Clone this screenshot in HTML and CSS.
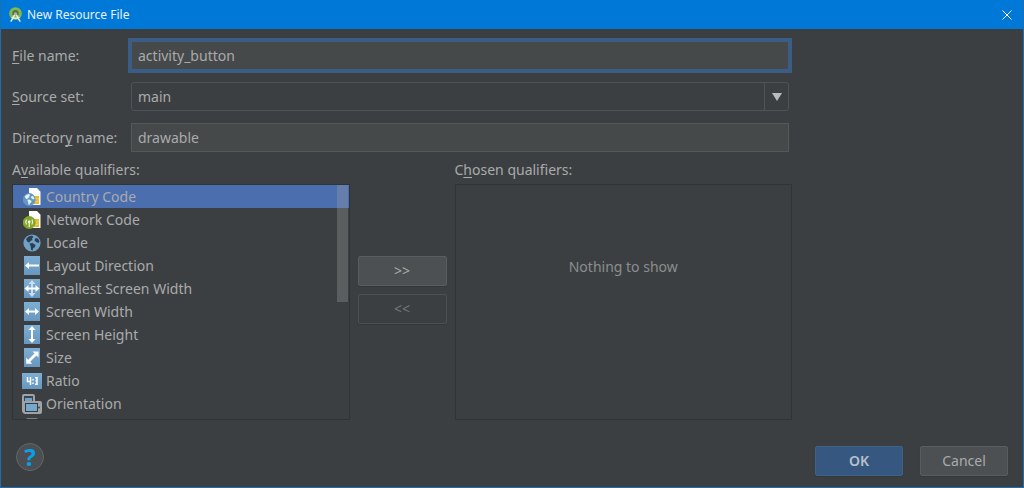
FILE: index.html
```html
<!DOCTYPE html>
<html lang="en">
<head>
<meta charset="utf-8">
<meta name="viewport" content="width=device-width, initial-scale=1">
<title>New Resource File</title>
<link rel="stylesheet" href="styles.css">
</head>
<body>
<svg class="defs" aria-hidden="true">
  <defs>
    <linearGradient id="tile" x1="0" y1="0" x2="0" y2="1"><stop offset="0" stop-color="#7eaed2"/><stop offset="1" stop-color="#6797bf"/></linearGradient>
    <g id="land" fill="currentColor">
      <path d="M3 5 5.500 2.500 9 1.500l1.500 1.500L9 4.500 9.500 6 7.500 7 6.500 8.500 4.500 8z"/>
      <path d="m6.500 9.500 3-.5 3 2-.5 2-2 1.500-.5 2.300-1.500-1.300-.3-3z"/>
      <path d="m12.500 4 2.500.5 1.500 3-1 1.500-2.500-1-1.500-1.800z"/>
    </g>
    <g id="sim">
      <path d="M6 0h8l3.500 3.800V17H6z" fill="#fff"/>
      <path d="M11 8h5v8h-5z" fill="#e6bd2c"/>
      <path d="M11 10.700h5M11 13.300h5" stroke="#f6dc72" stroke-width=".6"/>
    </g>
  </defs>
</svg>
<form class="dialog">
  <header class="titlebar">
    <svg class="app-icon" viewBox="0 0 16 16" aria-hidden="true">
      <circle cx="8" cy="7" r="6.800" fill="#83b84d"/>
      <path d="M4.600 6.500a3.400 3.400 0 0 1 6.800 0v2H4.600z" fill="#56744c"/>
      <path d="M7 8.600 3.300 15M9 8.600l3.700 6.400M4.400 11.200Q8 12.800 11.600 11.200" fill="none" stroke="#e8eee8" stroke-width="1.600" stroke-linecap="round"/>
      <circle cx="8" cy="7.200" r="1.700" fill="#a9b5a2"/>
    </svg>
    <h1 class="title">New Resource File</h1>
    <button class="close" type="button" aria-label="Close">
      <svg viewBox="0 0 10 10" aria-hidden="true"><path d="m.5.5 9 9m0-9-9 9" stroke="#fff" stroke-width="1"/></svg>
    </button>
  </header>
  <main class="content">
    <div class="fields">
      <label for="file"><u>F</u>ile name:</label>
      <input class="field focused" id="file" type="text" value="activity_button">
      <label for="source"><u>S</u>ource set:</label>
      <div class="combo">
        <select class="field" id="source"><option>main</option></select>
        <span class="combo-arrow"><svg viewBox="0 0 10 8" aria-hidden="true"><path d="M0 0h10L5 8z" fill="#bbb"/></svg></span>
      </div>
      <label for="dir">Director<u>y</u> name:</label>
      <input class="field" id="dir" type="text" value="drawable">
    </div>
    <div class="qualifiers">
      <section class="column">
        <h2 class="caption" id="available">A<u>v</u>ailable qualifiers:</h2>
        <div class="panel">
          <ul class="list" role="listbox" tabindex="0" aria-labelledby="available">
            <li class="item selected" role="option" aria-selected="true"><svg viewBox="0 0 18 18"><use href="#sim"/><circle cx="6.200" cy="11.500" r="6.400" fill="#6298c2"/><g transform="translate(-.4 5) scale(.72)" color="#e6f0f7"><use href="#land"/></g></svg>Country Code</li>
            <li class="item" role="option"><svg viewBox="0 0 18 18"><use href="#sim"/><circle cx="6.200" cy="11.500" r="6.400" fill="#83a52b"/><path d="M6.200 11.500V16M3.500 8.500q-1.500 2.500 0 5M8.900 8.500q1.500 2.500 0 5" fill="none" stroke="#f2f7db" stroke-width="1.200"/><circle cx="6.200" cy="10.800" r="1.400" fill="#fff"/></svg>Network Code</li>
            <li class="item" role="option"><svg viewBox="0 0 18 18"><circle cx="9" cy="9" r="8.600" fill="#70a2c8"/><g color="#2b4152"><use href="#land"/></g></svg>Locale</li>
            <li class="item" role="option"><svg class="tall" viewBox="0 0 18 19"><path d="M1 0h16v19H1z" fill="url(#tile)"/><path d="M6 6 2 9.500 6 13v-2.500h10v-2H6z" fill="#fff"/></svg>Layout Direction</li>
            <li class="item" role="option"><svg class="tall" viewBox="0 0 18 19"><path d="M1 0h16v19H1z" fill="url(#tile)"/><path d="m9 1 3.500 4H10v9h2.500L9 18l-3.500-4H8V5H5.500z" fill="#c9ddeb"/><path d="m1.500 9.500 4-3.500v2.500h7V6l4 3.500-4 3.500v-2.500h-7V13z" fill="#fff"/></svg>Smallest Screen Width</li>
            <li class="item" role="option"><svg class="tall" viewBox="0 0 18 19"><path d="M1 0h16v19H1z" fill="url(#tile)"/><path d="m2 9.500 4-3.500v2.500h6V6l4 3.500-4 3.500v-2.500H6V13z" fill="#fff"/></svg>Screen Width</li>
            <li class="item" role="option"><svg class="tall" viewBox="0 0 18 19"><path d="M1 0h16v19H1z" fill="url(#tile)"/><path d="m9 1 3.500 4H10v9h2.500L9 18l-3.500-4H8V5H5.500z" fill="#fff"/></svg>Screen Height</li>
            <li class="item" role="option"><svg class="tall" viewBox="0 0 18 19"><path d="M1 0h16v19H1z" fill="url(#tile)"/><path d="M15.500 3.500v6l-2-2-6.300 6.300 2 2h-6v-6l2 2 6.300-6.300-2-2z" fill="#fff"/></svg>Size</li>
            <li class="item" role="option"><svg class="wide" viewBox="0 0 20 20"><path d="M0 2h20v16H0z" fill="url(#tile)"/><path d="M5.500 6v4.500H9M8.500 6v8M13 6.700h2v6.600h-2M13.500 10h1.500" fill="none" stroke="#fff" stroke-width="1.500"/><path d="M10.300 8h1.400v1.500h-1.400zM10.300 11.500h1.400V13h-1.400z" fill="#fff"/></svg>Ratio</li>
            <li class="item" role="option"><svg class="wide" viewBox="0 0 20 20"><rect x="1" y="1" width="11" height="17" rx="1" fill="#3b4750" stroke="#a0a3a5" stroke-width="2"/><path d="M3 4h7v3H3z" fill="#6fa2c8"/><rect x="2" y="8" width="17" height="11" rx="1" fill="#353b40" stroke="#a0a3a5" stroke-width="2"/><path d="M4 10h11v7H4z" fill="#75a8cd"/><path d="M16 9h2v9h-2z" fill="#a0a3a5"/><circle cx="17" cy="13.500" r="1" fill="#444"/></svg>Orientation</li>
            <li class="item" role="option" aria-label="UI mode"><svg viewBox="0 0 18 18"><rect x="4" y="1" width="10" height="16" rx="1" fill="#507b9d" stroke="#808385" stroke-width="2"/></svg></li>
          </ul>
          <span class="thumb"></span>
        </div>
      </section>
      <div class="transfer">
        <button class="btn" type="button" aria-label="Add qualifier">&gt;&gt;</button>
        <button class="btn" type="button" aria-label="Remove qualifier" disabled>&lt;&lt;</button>
      </div>
      <section class="column">
        <h2 class="caption">C<u>h</u>osen qualifiers:</h2>
        <div class="panel empty"><p>Nothing to show</p></div>
      </section>
    </div>
  </main>
  <footer class="footer">
    <button class="help" type="button" aria-label="Help">?</button>
    <div class="actions">
      <button class="btn primary" type="submit">OK</button>
      <button class="btn" type="button">Cancel</button>
    </div>
  </footer>
</form>
</body>
</html>
```
FILE: styles.css
```css
* { box-sizing: border-box; }

body {
  margin: 0;
  background: #3c3f41;
  color: #a9abac;
  font: 14px/20px "Noto Sans", "Open Sans", sans-serif;
}

button, input, select { font: inherit; color: inherit; }
h1, h2, p, ul { margin: 0; padding: 0; font-size: inherit; font-weight: 400; }
u { text-underline-offset: 2px; text-decoration-skip-ink: none; }

.defs { position: absolute; width: 0; height: 0; }

.dialog {
  display: flex;
  flex-direction: column;
  height: 100vh;
  min-height: 440px;
  border: 1px solid #1f6fb0;
  border-top: 0;
}

.titlebar {
  display: flex;
  align-items: center;
  gap: 4px;
  height: 29px;
  padding: 0 4px 0 7px;
  background: #0078d7;
  color: #e8f2fb;
}
.app-icon { width: 15px; height: 15px; }
.title { flex: 1; font-size: 12px; }
.close { display: grid; place-items: center; width: 24px; height: 24px; padding: 0; border: 0; background: none; }
.close svg { width: 10px; height: 10px; }

.content {
  display: flex;
  flex: 1;
  flex-direction: column;
  min-height: 0;
  padding: 12px 231px 0 11px;
}

.fields {
  display: grid;
  grid-template-columns: 119px 1fr;
  align-items: center;
  gap: 12px 0;
  padding-right: 3px;
}

.field {
  width: 100%;
  height: 29px;
  padding: 0 6px;
  border: 1px solid #55585a;
  border-radius: 0;
  outline: 0;
  background: #45494a;
}
.focused { border-color: #3b5c84; box-shadow: 0 0 0 3px #3b5c84; }

.combo { display: grid; grid-template-columns: 1fr 25px; }
.combo select {
  grid-area: 1 / 1 / 2 / 3;
  appearance: none;
  border-color: #505355;
  border-radius: 3px;
  background: #3c3f41;
}
.combo-arrow {
  grid-area: 1 / 2;
  display: grid;
  place-items: center;
  border-left: 1px solid #505355;
  pointer-events: none;
}
.combo-arrow svg { width: 10px; height: 8px; }

.qualifiers {
  display: grid;
  grid-template-columns: 1fr 89px 1fr;
  gap: 8px;
  flex: 1;
  min-height: 0;
  padding-top: 8px;
}
.column { display: flex; flex-direction: column; min-height: 0; }
.caption { height: 24px; }

.panel {
  position: relative;
  flex: 1;
  min-height: 0;
  border: 1px solid #313436;
}
.list { height: 100%; overflow-y: auto; scrollbar-width: none; list-style: none; outline: 0; }
.item { display: flex; align-items: center; gap: 5px; height: 23px; padding-left: 10px; white-space: nowrap; }
.item svg { width: 18px; height: 18px; }
.item .tall { height: 19px; }
.item .wide { width: 20px; height: 20px; margin: 0 -1px; }
.selected { background: #4b6eaf; }
.thumb {
  position: absolute;
  top: 0;
  right: 1px;
  width: 11px;
  height: 50%;
  background: rgb(166 166 166 / 30%);
}

.empty { display: flex; justify-content: center; padding-top: 72px; color: #8b8e90; }

.transfer { display: grid; align-content: center; gap: 8px; }

.btn {
  min-width: 88px;
  height: 30px;
  padding: 0 12px;
  border: 1px solid #5a5d5f;
  border-radius: 2px;
  background: #4c5052;
  box-shadow: 0 1px 1px #353839;
}
.btn:disabled { border-color: #4d5052; background: #3c3f41; color: #777; }
.primary { border-color: #3c6288; background: #365880; color: #b8c1cc; font-weight: 600; }

.footer {
  display: flex;
  align-items: flex-start;
  justify-content: space-between;
  height: 67px;
  padding: 23px 15px 0;
}
.actions { display: flex; gap: 17px; padding-top: 3px; }
.help {
  display: grid;
  place-items: center;
  width: 28px;
  height: 28px;
  padding: 0;
  border: 1px solid #63676a;
  border-radius: 50%;
  background: #4b4f51;
  color: #08a0e9;
  font-size: 24px;
  font-weight: 700;
}
```
